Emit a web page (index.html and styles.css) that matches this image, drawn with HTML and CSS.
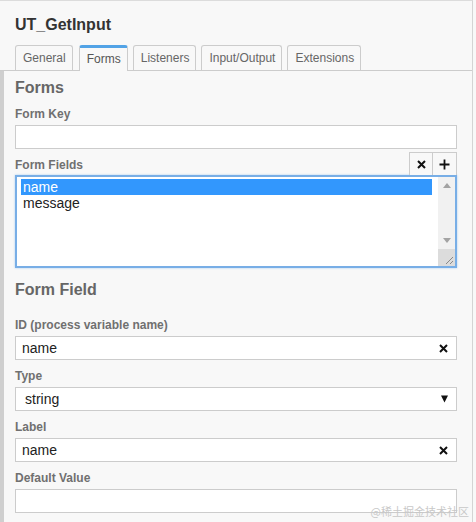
FILE: index.html
```html
<!DOCTYPE html>
<html>
<head>
<meta charset="utf-8">
<link rel="stylesheet" href="styles.css">
</head>
<body>
<div class="panel">
  <div class="header">
    <h1 class="title">UT_GetInput</h1>
  </div>
  <div class="tabs">
    <div class="tab">General</div>
    <div class="tab active">Forms</div>
    <div class="tab">Listeners</div>
    <div class="tab">Input/Output</div>
    <div class="tab">Extensions</div>
  </div>
  <div class="content">
    <h2 class="section">Forms</h2>
    <div class="field">
      <label class="label">Form Key</label>
      <div class="input"></div>
    </div>
    <div class="field-row">
      <label class="label">Form Fields</label>
      <div class="btns">
        <div class="btn">
          <svg width="9" height="9" viewBox="0 0 9 9"><path d="M1 1L8 8M8 1L1 8" stroke="#111" stroke-width="2"/></svg>
        </div>
        <div class="btn">
          <svg width="11" height="11" viewBox="0 0 11 11"><path d="M5.5 0.5V10.5M0.5 5.5H10.5" stroke="#111" stroke-width="1.8"/></svg>
        </div>
      </div>
    </div>
    <div class="listbox">
      <div class="items">
        <div class="item selected">name</div>
        <div class="item">message</div>
      </div>
      <div class="scrollbar">
        <div class="arrow">
          <svg width="8" height="5" viewBox="0 0 8 5"><path d="M0 5L4 0L8 5Z" fill="#a3a3a3"/></svg>
        </div>
        <div class="track"></div>
        <div class="arrow">
          <svg width="8" height="5" viewBox="0 0 8 5"><path d="M0 0L8 0L4 5Z" fill="#a3a3a3"/></svg>
        </div>
        <div class="corner">
          <svg width="9" height="9" viewBox="0 0 9 9"><path d="M1 8L8 1M5 8L8 5" stroke="#888" stroke-width="1"/></svg>
        </div>
      </div>
    </div>
    <h2 class="section section-2">Form Field</h2>
    <div class="field">
      <label class="label">ID (process variable name)</label>
      <div class="input"><span class="value">name</span><span class="clear">
        <svg width="9" height="9" viewBox="0 0 9 9"><path d="M1 1L8 8M8 1L1 8" stroke="#111" stroke-width="2"/></svg>
      </span></div>
    </div>
    <div class="field">
      <label class="label">Type</label>
      <div class="input select"><span class="value">string</span><span class="caret">
        <svg width="7" height="8" viewBox="0 0 7 8"><path d="M0 0.5H7L3.5 7.5Z" fill="#111"/></svg>
      </span></div>
    </div>
    <div class="field">
      <label class="label">Label</label>
      <div class="input"><span class="value">name</span><span class="clear">
        <svg width="9" height="9" viewBox="0 0 9 9"><path d="M1 1L8 8M8 1L1 8" stroke="#111" stroke-width="2"/></svg>
      </span></div>
    </div>
    <div class="field">
      <label class="label">Default Value</label>
      <div class="input"></div>
    </div>
  </div>
  <div class="watermark">@稀土掘金技术社区</div>
</div>
</body>
</html>
```
FILE: styles.css
```css
* { box-sizing: border-box; }
html, body {
  margin: 0;
  padding: 0;
  background: #f8f8f8;
  font-family: "Liberation Sans", Arial, sans-serif;
}
.panel {
  position: relative;
  width: 473px;
  height: 522px;
  border-top: 1px solid #dcdcdc;
  border-right: 1px solid #d4d4d4;
  background: #f8f8f8;
  overflow: hidden;
}
.header {
  padding: 14px 15px 0 15px;
  height: 44px;
}
.title {
  margin: 0;
  font-size: 16px;
  line-height: 20px;
  font-weight: bold;
  color: #333;
}
.tabs {
  display: flex;
  gap: 5px;
  padding-left: 15px;
  height: 26px;
  border-bottom: 1px solid #ccc;
  align-items: flex-end;
}
.tab {
  height: 25px;
  padding: 0 6px 0 7px;
  border: 1px solid #ccc;
  border-bottom: none;
  border-radius: 3px 3px 0 0;
  font-size: 12px;
  line-height: 24px;
  color: #666;
  background: #f8f8f8;
}
.tab.active {
  height: 26px;
  border-top: 3px solid #52a3e6;
  line-height: 22px;
  color: #555;
  margin-left: 1px;
  margin-bottom: -1px;
  padding-bottom: 1px;
}
.content {
  border-left: 4px solid #cfcfcf;
  padding: 0 15px 0 11px;
  height: 460px;
}
.section {
  margin: 0;
  padding-top: 7px;
  height: 27px;
  font-size: 16px;
  line-height: 20px;
  font-weight: bold;
  color: #666;
}
.section-2 {
  padding-top: 12px;
  height: 41px;
}
.field {
  display: flex;
  flex-direction: column;
}
.label {
  display: block;
  font-size: 12px;
  line-height: 15px;
  font-weight: bold;
  color: #707070;
  padding: 9px 0 3px;
}
.input {
  height: 24px;
  border: 1px solid #ccc;
  background: #fff;
  display: flex;
  align-items: center;
  justify-content: space-between;
  padding: 0 8px 0 6px;
  font-size: 14px;
  color: #222;
}
.select {
  padding-left: 9px;
  padding-right: 8px;
}
.clear, .caret {
  display: flex;
  align-items: center;
}
.field-row {
  display: flex;
  justify-content: space-between;
  align-items: flex-start;
  height: 26px;
}
.btns {
  display: flex;
  margin-top: 3px;
}
.btn {
  width: 24px;
  height: 23px;
  border: 1px solid #ccc;
  border-bottom: none;
  background: #f8f8f8;
  display: flex;
  align-items: center;
  justify-content: center;
}
.btn + .btn { border-left: none; }
.listbox {
  height: 93px;
  border: 2px solid #78aee6;
  box-shadow: 0 0 2px #a8cdf2;
  background: #fff;
  display: flex;
  padding: 2px 0 0 0;
}
.items {
  flex: 1;
  padding: 0 6px 0 4px;
}
.item {
  height: 16px;
  line-height: 16px;
  font-size: 14px;
  color: #222;
  padding-left: 2px;
}
.item.selected {
  background: #3297fd;
  color: #fff;
}
.scrollbar {
  width: 17px;
  margin-top: -2px;
  display: flex;
  flex-direction: column;
  background: #f1f1f1;
}
.arrow {
  height: 17px;
  display: flex;
  align-items: center;
  justify-content: center;
}
.track { flex: 1; }
.corner {
  height: 17px;
  display: flex;
  align-items: flex-end;
  justify-content: flex-end;
  background: #dcdcdc;
  padding: 0 1px 1px 0;
}
.watermark {
  position: absolute;
  right: 3px;
  bottom: 4px;
  font-family: "Noto Sans CJK SC", sans-serif;
  font-size: 11px;
  line-height: 13px;
  color: #c8c8c8;
}
```
